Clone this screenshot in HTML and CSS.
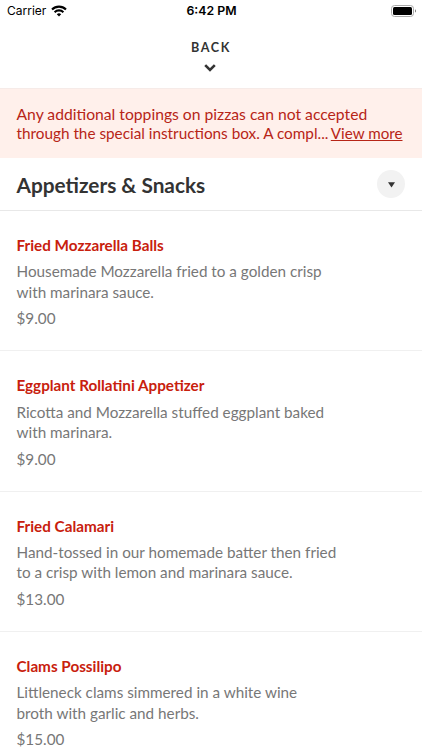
FILE: index.html
```
<!DOCTYPE html>
<html lang="en">
<head>
  <meta charset="UTF-8" />
  <meta name="viewport" content="width=device-width, initial-scale=1" />
  <title>Appetizers &amp; Snacks</title>
  <link rel="stylesheet" href="styles.css">
</head>
<body>
  <div class="status-bar">
    <div class="carrier">
      <span>Carrier</span>
      <svg width="16" height="12" viewBox="0 0 16 12" fill="none" stroke="#000" stroke-width="2.1">
        <path d="M1 4.5a10 10 0 0 1 14 0" />
        <path d="M3.6 7.2a6.3 6.3 0 0 1 8.8 0" />
        <path d="M8 11.5L5.8 9.3a3.1 3.1 0 0 1 4.4 0z" fill="#000" stroke="none" />
      </svg>
    </div>
    <div class="clock">6:42 PM</div>
    <svg class="battery" width="25" height="12" viewBox="0 0 25 12">
      <rect x="0.5" y="0.5" width="22" height="11" rx="3" fill="none" stroke="#aaa" />
      <rect x="2" y="2" width="19" height="8" rx="1.5" fill="#000" />
      <path d="M24 4.2v3.4q1-.5 1-1.7t-1-1.7z" fill="#777" />
    </svg>
  </div>

  <header class="back">
    <span>BACK</span>
    <svg width="12" height="8" viewBox="0 0 12 8" fill="none" stroke="#333" stroke-width="2.6">
      <path d="M1.2 1.2L6 6l4.8-4.8" />
    </svg>
  </header>

  <div class="notice">
    <div class="notice-lead">Any additional toppings on pizzas can not accepted</div>
    <div class="notice-row"><span>through the special instructions box. A compl...</span> <a class="more">View more</a></div>
  </div>

  <div class="category">
    <h1>Appetizers &amp; Snacks</h1>
    <button class="toggle" aria-label="Choose category">
      <svg width="7" height="6" viewBox="0 0 7 6"><path d="M0 .3h7L3.5 5.6z" fill="#333" /></svg>
    </button>
  </div>

  <main class="menu">
    <article class="item">
      <h2>Fried Mozzarella Balls</h2>
      <p>Housemade Mozzarella fried to a golden crisp<br>with marinara sauce.</p>
      <div class="price">$9.00</div>
    </article>
    <article class="item">
      <h2>Eggplant Rollatini Appetizer</h2>
      <p>Ricotta and Mozzarella stuffed eggplant baked<br>with marinara.</p>
      <div class="price">$9.00</div>
    </article>
    <article class="item">
      <h2>Fried Calamari</h2>
      <p>Hand-tossed in our homemade batter then fried<br>to a crisp with lemon and marinara sauce.</p>
      <div class="price">$13.00</div>
    </article>
    <article class="item">
      <h2>Clams Possilipo</h2>
      <p>Littleneck clams simmered in a white wine<br>broth with garlic and herbs.</p>
      <div class="price">$15.00</div>
    </article>
  </main>
</body>
</html>
```
FILE: styles.css
```
* {
  box-sizing: border-box;
}
body {
  margin: 0;
  height: 750px;
  overflow: hidden;
  background: #fff;
  color: #333;
  font-family: Lato, sans-serif;
}
h1, h2, p {
  margin: 0;
}
svg {
  display: block;
}
.status-bar {
  height: 21px;
  padding: 0 6px 0 7px;
  display: grid;
  grid-template-columns: 1fr auto 1fr;
  align-items: center;
  color: #000;
  font-family: Inter, sans-serif;
  font-size: 12px;
}
.carrier {
  display: flex;
  align-items: center;
  gap: 4.5px;
}
.clock {
  font-size: 12.3px;
  font-weight: 600;
}
.battery {
  justify-self: end;
}
.back {
  height: 67px;
  padding: 19px 0 0;
  display: flex;
  flex-direction: column;
  align-items: center;
  gap: 9px;
  font-size: 12.6px;
  line-height: 15px;
  font-weight: 700;
  letter-spacing: 1.6px;
}
.back svg {
  margin-right: 1.5px;
}
.notice {
  height: 70px;
  padding: 16px 17px 0 16.5px;
  border-top: 1px solid #f6ebe8;
  background: #fff0eb;
  color: #b72517;
  font-size: 15.3px;
  line-height: 18px;
  white-space: nowrap;
}
.notice-lead {
  font-size: 15.7px;
  line-height: 19px;
}
.notice-row {
  display: flex;
  justify-content: space-between;
  margin-right: 2.5px;
}
.more {
  font-size: 15.2px;
  text-decoration: underline;
}
.category {
  height: 53px;
  padding: 0 17px 0 16.5px;
  display: flex;
  align-items: center;
  justify-content: space-between;
  border-bottom: 1px solid #e8e8e8;
}
.category h1 {
  font-size: 20.8px;
  font-weight: 700;
}
.toggle {
  width: 28px;
  height: 28px;
  padding: 1px 0 0;
  display: flex;
  align-items: center;
  justify-content: center;
  border: none;
  border-radius: 50%;
  background: #f2f2f2;
}
.item {
  height: 140.4px;
  padding: 24px 17px 0 16.5px;
  border-bottom: 1px solid #f0f0f0;
  white-space: nowrap;
}
.item h2 {
  color: #c8200d;
  font-size: 15.25px;
  line-height: 20px;
  font-weight: 700;
}
.item p {
  margin-top: 6.2px;
  color: #777;
  font-size: 15.28px;
  line-height: 20.5px;
}
.price {
  margin-top: 6px;
  color: #777;
  font-size: 15.25px;
  line-height: 20px;
}
```
